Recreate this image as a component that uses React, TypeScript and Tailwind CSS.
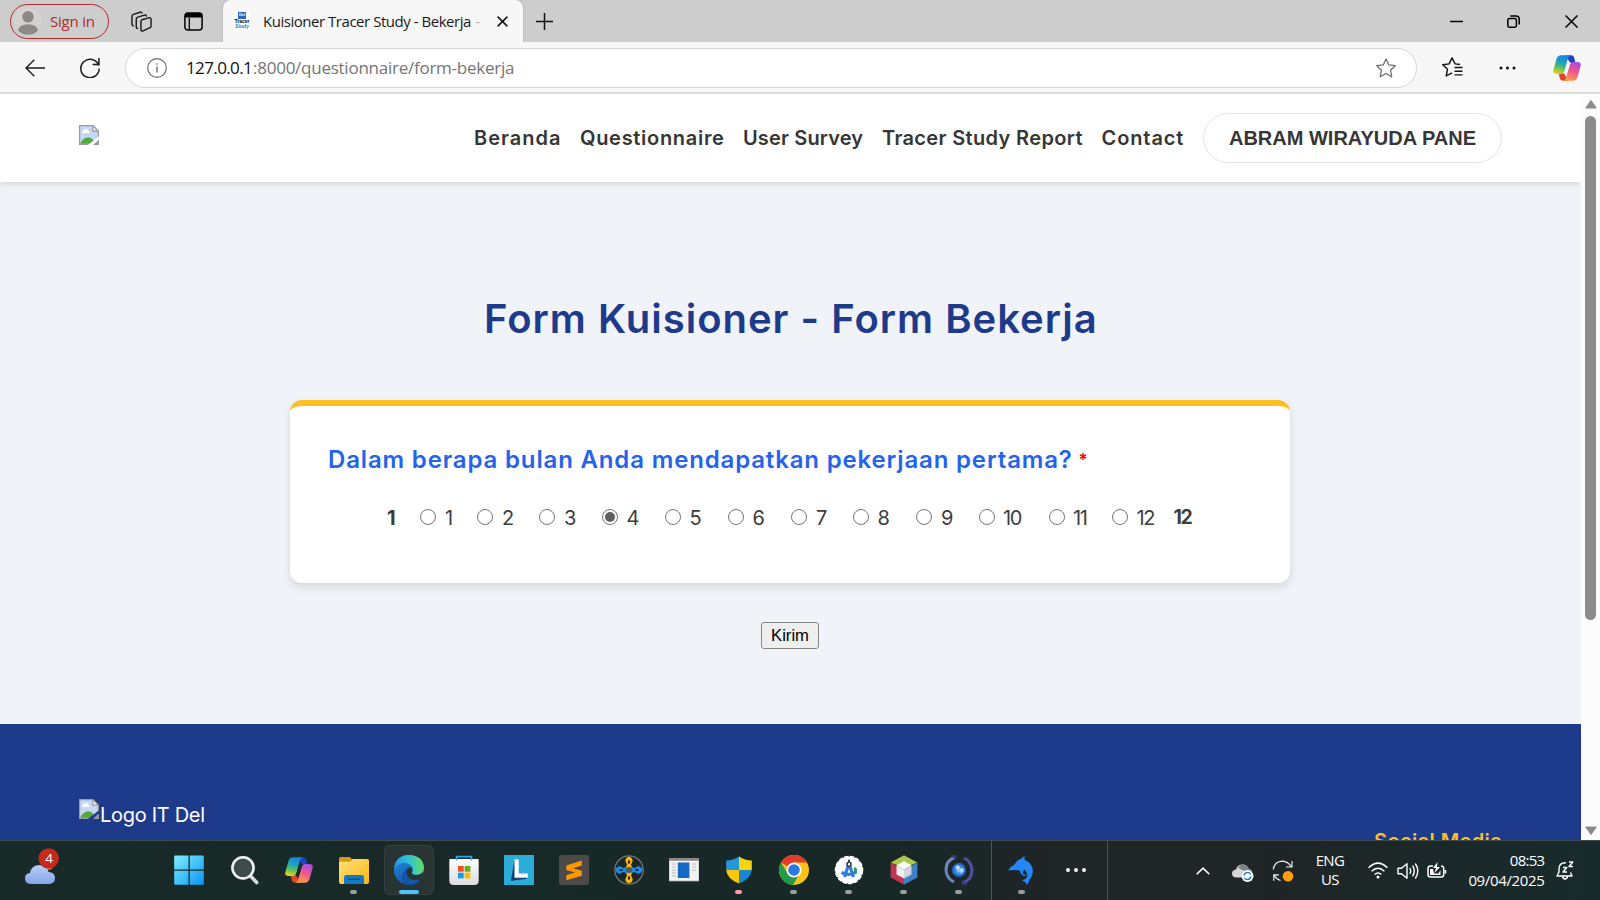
import type { ReactNode } from "react";

const POP = "font-[Inter,sans-serif]";
const SEGOE = "font-['Open_Sans',sans-serif]";
const ARIAL = "font-['Liberation_Sans',sans-serif]";

function BrokenImage({ hole }: { hole: string }) {
  return (
    <svg className="block h-5 w-5 shrink-0" viewBox="0 0 20 20">
      <path d="M.6.6h13.2l5.6 5.6v13.2H.6z" fill="#c6d8f8" stroke="#9a9a9a" strokeWidth="1.2" />
      <path d="M3 8q-.6-2.2 1.8-2.4Q5.600 3 7.600 4q2 .2 1.800 2 1.400.4.8 2z" fill="#fff" />
      <path d="M1.200 18.800Q4 12.500 9.500 12.300q3.500.2 5.200 3.200l-3 3.300z" fill="#55a83a" />
      <path d="M13.800.6v5.600h5.600z" fill="#f4f4f4" stroke="#9a9a9a" strokeWidth="1.200" />
      <path d="M20 11.200v3.200L14.200 20H8.800z" fill={hole} />
      <path d="M14.200 20l5.200-5v4.400z" fill="#9a9a9a" />
    </svg>
  );
}

function Copilot({ id, gap }: { id: string; gap: string }) {
  return (
    <svg className="h-[26px] w-7" viewBox="0 0 28 26">
      <defs>
        <linearGradient id={id + "a"} x1="0.5" y1="0" x2="0.25" y2="1">
          <stop offset="0" stopColor="#1a84e0" />
          <stop offset=".4" stopColor="#1fa6b8" />
          <stop offset=".7" stopColor="#6fc156" />
          <stop offset="1" stopColor="#f0d21a" />
        </linearGradient>
        <linearGradient id={id + "b"} x1=".8" y1="0" x2=".4" y2="1">
          <stop offset="0" stopColor="#a04be8" />
          <stop offset=".5" stopColor="#f0568f" />
          <stop offset="1" stopColor="#ff9a4a" />
        </linearGradient>
      </defs>
      <path d="M13 .3h5.200q2.300 0 3 2.400L22.500 8H17z" fill="#1b45c4" />
      <path d="M15 25.700H9.800q-2.300 0-3-2.400L5.500 18H11z" fill="#e2452c" />
      <path d="M8 .3h9.500q-1.800.6-2.500 3L11.300 16.500Q10.500 19 7.500 19H3.500Q-.8 19 .5 14.500L3.500 4Q4.600.3 8 .3z" fill={`url(#${id}a)`} />
      <path d="M20 25.700h-9.500q1.800-.6 2.500-3L16.700 9.500Q17.500 7 20.500 7h4q4.300 0 3 4.500L24.500 22q-1.100 3.700-4.500 3.700z" fill={`url(#${id}b)`} />
      <path d="M14 9q.6-1.500 2-1.500h2.200q-1 .8-1.400 2.300l-2.200 7Q13.800 18.500 12.400 18.500H10.200q1-.8 1.300-2z" fill={gap} />
    </svg>
  );
}

function TabBar() {
  return (
    <div className={`flex h-[42px] shrink-0 items-stretch bg-[#cdcdcd] ${SEGOE}`}>
      <div className="flex w-[223px] items-center pl-[10px]">
        <div className="flex h-[35px] w-[99px] items-center rounded-full border-[1.5px] border-[#b02a30] pl-[3px]">
          <svg className="h-7 w-7" viewBox="0 0 28 28">
            <circle cx="14" cy="14" r="13.500" fill="#d4d2d0" />
            <circle cx="14" cy="9.800" r="5.800" fill="#8d8986" />
            <path d="M4 23.600q1.500-6.300 10-6.300t10 6.300q-4 4.200-10 4.200T4 23.600z" fill="#8d8986" />
          </svg>
          <span className="ml-2 text-[15px] tracking-[-0.2px] whitespace-nowrap text-[#b02a30]">Sign in</span>
        </div>
        <svg className="ml-[22px] h-[21px] w-[21px]" viewBox="0 0 22 22" fill="none" stroke="#1b1b1b" strokeWidth="1.500" strokeLinejoin="round" strokeLinecap="round">
          <path d="M11.500 9.200 18.800 7.200q2.200-.5 2.200 1.600v6.800q0 1.600-1.500 2.100l-6.900 3.100q-2.200.8-2.200-1.300V11.500q0-1.800 1.100-2.300z" />
          <path d="M6.800 18.300q-1.300-.2-1.300-1.800V8.600q0-1.700 1.600-2.200l7-2.100q1.600-.4 2 .9" />
          <path d="M2.400 15.500Q1 15.100 1 13.500V5.800q0-1.700 1.600-2.200l6.900-2.300q1.400-.4 1.900.7" />
        </svg>
        <svg className="ml-8 h-[19px] w-[19px]" viewBox="0 0 19 19">
          <rect x=".9" y=".9" width="17.200" height="17.200" rx="3" fill="none" stroke="#000" strokeWidth="1.500" />
          <path d="M1 5.500V3q0-2 2-2h13q2 0 2 2v2.500z" fill="#000" />
          <path d="M5.300 6v12" stroke="#000" strokeWidth="1.300" />
        </svg>
      </div>
      <div className="flex w-[300px] items-center rounded-t-lg bg-[#f7f7f7] pl-[11px] shadow-[0_0_2px_rgba(0,0,0,0.25)]">
        <div className="flex h-[18px] w-4 flex-col items-center bg-white font-['Liberation_Sans',sans-serif] font-bold">
          <div className="h-[7px] w-[8px] bg-[#2f67b8] text-center text-[4px] leading-[6px] text-white">Del</div>
          <div className="text-[5px] leading-[5px] text-black">Tracer</div>
          <div className="text-[5px] leading-[4px] text-[#1b7fd0] italic">Study</div>
        </div>
        <div className="ml-[13px] flex w-[221px] pt-px text-[15px] tracking-[-0.470px] whitespace-nowrap text-[#1a1a1a]">
          Kuisioner Tracer Study - Bekerja&nbsp;<span className="ml-px text-[#b5b5b5]">-</span>
        </div>
        <svg className="ml-[13px] h-[11px] w-[11px]" viewBox="0 0 11 11" stroke="#111" strokeWidth="1.500">
          <path d="M.6.6l9.800 9.800M10.400.6.6 10.400" />
        </svg>
      </div>
      <div className="flex flex-1 items-center pl-[13px]">
        <svg className="h-[17px] w-[17px]" viewBox="0 0 17 17" stroke="#111" strokeWidth="1.500">
          <path d="M8.500 0v17M0 8.500h17" />
        </svg>
      </div>
      <div className="flex items-center pr-[22px]">
        <svg className="h-[13px] w-[13px]" viewBox="0 0 13 13" stroke="#000" strokeWidth="1.500"><path d="M0 6.500h13" /></svg>
        <svg className="ml-11 h-[13px] w-[13px]" viewBox="0 0 13 13" fill="none" stroke="#000" strokeWidth="1.500">
          <rect x=".8" y="3.600" width="8.600" height="8.600" rx="1.600" />
          <path d="M3.400.9H9q3.200 0 3.200 3.200v5.400" />
        </svg>
        <svg className="ml-[45px] h-[13px] w-[13px]" viewBox="0 0 13 13" stroke="#000" strokeWidth="1.500"><path d="M.5.5l12 12M12.500.5l-12 12" /></svg>
      </div>
    </div>
  );
}

function Toolbar() {
  return (
    <div className={`flex h-[52px] shrink-0 items-center border-b-2 border-[#dcdcdc] bg-[#f7f7f7] pt-px ${SEGOE}`}>
      <svg className="ml-[25px] h-[18px] w-5" viewBox="0 0 20 18" fill="none" stroke="#1b1b1b" strokeWidth="1.400">
        <path d="M20 9H1M9.300.7 1 9l8.300 8.300" />
      </svg>
      <svg className="ml-[35px] h-[21px] w-5" viewBox="0 0 20 21" fill="none" stroke="#1b1b1b" strokeWidth="1.500">
        <path d="M18.700 8.500A9.200 9.200 0 1 0 19.200 11.500" />
        <path d="M18.900 1v6.600h-6.300" />
      </svg>
      <div className="ml-[25px] flex h-10 w-[1292px] items-center rounded-full border-[1.500px] border-[#d6d6d6] bg-white pr-5 pl-[21px]">
        <svg className="h-5 w-5" viewBox="0 0 20 20" fill="none" stroke="#6b6b6b" strokeWidth="1.200">
          <circle cx="10" cy="10" r="9.300" />
          <path d="M10 8.600v6M10 5.200v1.600" strokeWidth="1.400" />
        </svg>
        <span className="ml-[19px] w-[67px] text-[17px] tracking-[-0.620px] whitespace-nowrap text-[#111]">127.0.0.1</span>
        <span className="flex-1 text-[17px] tracking-[-0.250px] whitespace-nowrap text-[#757575]">:8000/questionnaire/form-bekerja</span>
        <svg className="h-5 w-5" viewBox="0 0 20 20" fill="none" stroke="#6b6b6b" strokeWidth="1.200" strokeLinejoin="round">
          <path d="M10 .9l2.800 6 6.500.8-4.800 4.500 1.300 6.600L10 15.500l-5.800 3.300 1.300-6.600L.7 7.700l6.500-.8z" />
        </svg>
      </div>
      <svg className="ml-[25px] h-[21px] w-[21px]" viewBox="0 0 21 21" fill="none" stroke="#111" strokeWidth="1.400" strokeLinejoin="round">
        <path d="M18 7.500l-4.800-.6L10 .9l-2.800 6-6.500.8 4.800 4.500-1.300 6.800 5.800-3.200" />
        <path d="M12.500 10.500h8M12.500 14.200h8M12.500 17.900h8" />
      </svg>
      <svg className="ml-9 h-1 w-[17px]" viewBox="0 0 17 4" fill="#111">
        <circle cx="2" cy="2" r="1.500" /><circle cx="8.500" cy="2" r="1.500" /><circle cx="15" cy="2" r="1.500" />
      </svg>
      <div className="ml-[37px]"><Copilot id="tb" gap="#f7f7f7" /></div>
    </div>
  );
}

function Header() {
  const link = "shrink-0 whitespace-nowrap";
  return (
    <header className={`relative flex h-[88px] shrink-0 items-center bg-white pl-[79px] text-xl font-semibold text-[#363636] shadow-[0_2px_6px_rgba(0,0,0,0.12)] ${POP}`}>
      <div className="w-[395px] pb-[6px]"><BrokenImage hole="#fff" /></div>
      <nav className="flex items-center gap-[19.500px]">
        <a className={`${link} w-[86.500px] tracking-[1px]`}>Beranda</a>
        <a className={`${link} w-[143.500px] tracking-[0.700px]`}>Questionnaire</a>
        <a className={`${link} w-[119.500px] tracking-[0.150px]`}>User Survey</a>
        <a className={`${link} w-[200px] tracking-[0.350px]`}>Tracer Study Report</a>
        <a className={`${link} w-[82px] tracking-[0.900px]`}>Contact</a>
        <div className={`flex h-[50px] w-[299px] items-center justify-center rounded-full border border-[#e5e5e5] font-bold whitespace-nowrap ${ARIAL}`}>ABRAM WIRAYUDA PANE</div>
      </nav>
    </header>
  );
}

const options = [
  { n: 1, cell: "w-[57px]", gap: "ml-[9px]" },
  { n: 2, cell: "w-[62px]", gap: "ml-[9px]" },
  { n: 3, cell: "w-[62.500px]", gap: "ml-[9px]" },
  { n: 4, cell: "w-[63px]", gap: "ml-[9px]" },
  { n: 5, cell: "w-[63px]", gap: "ml-[9px]" },
  { n: 6, cell: "w-[63.500px]", gap: "ml-[9px]" },
  { n: 7, cell: "w-[61.500px]", gap: "ml-[9px]" },
  { n: 8, cell: "w-[63.500px]", gap: "ml-[9px]" },
  { n: 9, cell: "w-[62.500px]", gap: "ml-[9px]" },
  { n: 10, cell: "w-[70px]", gap: "ml-[8.500px]" },
  { n: 11, cell: "w-[63.500px]", gap: "ml-[8.500px]" },
  { n: 12, cell: "w-[61.500px]", gap: "ml-[8.500px]" },
];

function Radio({ checked }: { checked: boolean }) {
  return (
    <span className="flex h-4 w-4 shrink-0 items-center justify-center rounded-full border-[1.500px] border-[#767676] bg-white">
      {checked && <span className="h-[10px] w-[10px] rounded-full bg-[#5f5f5f]" />}
    </span>
  );
}

function FormSection() {
  return (
    <main className={`flex h-[542px] shrink-0 flex-col items-center bg-[#f0f4f9] pt-[107px] pr-px ${POP}`}>
      <h1 className="flex h-[60px] w-[612px] items-center text-[40px] font-semibold tracking-[1px] whitespace-nowrap text-[#1e3a8a]">Form Kuisioner - Form Bekerja</h1>
      <section className="mt-[51px] h-[183px] w-[1000px] rounded-xl border-t-[6px] border-[#fbbf24] bg-white px-[38px] pt-[39px] shadow-[0_4px_10px_rgba(0,0,0,0.12)]">
        <div className="flex h-[30px] items-center whitespace-nowrap">
          <span className="w-[750.500px] text-[24px] font-semibold tracking-[0.840px] text-[#2563eb]">Dalam berapa bulan Anda mendapatkan pekerjaan pertama?</span>
          <span className="pt-[2px] text-[17px] font-semibold text-[#f00]">*</span>
        </div>
        <div className="mt-[26px] flex h-[32px] items-center pl-[59px] text-[20px] tracking-[-1.500px] text-[#3d3d3d]">
          <span className="w-[33px] pt-px font-bold">1</span>
          {options.map((o) => (
            <label key={o.n} className={`flex items-center ${o.cell}`}>
              <Radio checked={o.n === 4} />
              <span className={`pt-[2px] ${o.gap}`}>{o.n}</span>
            </label>
          ))}
          <span className="pt-px text-[19.500px] font-bold tracking-[-1.300px]">12</span>
        </div>
      </section>
      <button className={`mt-[39px] flex h-[27px] w-[58px] items-center justify-center rounded-[3px] border border-[#858585] bg-[#efefef] text-[16.670px] text-black ${ARIAL}`}>Kirim</button>
    </main>
  );
}

function Footer() {
  return (
    <footer className={`flex h-[116px] shrink-0 items-start justify-between overflow-hidden bg-[#1e3a8a] pt-[75px] pr-[80px] pl-[79px] ${POP}`}>
      <div className="flex h-[30px] items-center text-[20px] tracking-[-0.300px] text-white">
        <div className="self-start"><BrokenImage hole="#1e3a8a" /></div>
        <span className="ml-px pt-px">Logo IT Del</span>
      </div>
      <div className="mt-[27px] flex h-[30px] w-[127px] items-center text-[20px] font-semibold tracking-[0.400px] whitespace-nowrap text-[#fbbf24]">Social Media</div>
    </footer>
  );
}

function Scrollbar() {
  return (
    <div className="flex w-[19px] shrink-0 flex-col items-center bg-[#fcfcfc] pt-[5px] pb-1">
      <svg className="h-[10px] w-3" viewBox="0 0 12 10"><path d="M6 .8 11.500 8.400q.3 1-.8 1H1.300q-1.100 0-.8-1z" fill="#8b8b8b" /></svg>
      <div className="mt-[7px] h-[504px] w-[11px] rounded-full bg-[#8b8b8b]" />
      <div className="flex-1" />
      <svg className="h-[10px] w-3" viewBox="0 0 12 10"><path d="M6 9.200 11.500 1.600q.3-1-.8-1H1.300q-1.100 0-.8 1z" fill="#8b8b8b" /></svg>
    </div>
  );
}

function App30({ children }: { children: ReactNode }) {
  return <svg className="h-[30px] w-[30px]" viewBox="0 0 30 30">{children}</svg>;
}

function Slot({ children, mark }: { children: ReactNode; mark?: "gray" | "pink" | "active" }) {
  return (
    <div className="flex h-[59px] w-[55px] shrink-0 flex-col items-center">
      <div className={mark === "active" ? "mt-1 flex h-[50px] w-[50px] flex-col items-center rounded-md border border-[#35413f] bg-[#283533] pt-[9px]" : "mt-[14px] flex h-[40px] flex-col items-center"}>
        <div className="flex h-[30px] items-center">{children}</div>
        {mark === "gray" && <div className="mt-[5px] h-1 w-[7px] rounded-full bg-[#98a09f]" />}
        {mark === "pink" && <div className="mt-[5px] h-1 w-[7px] rounded-full bg-[#ff99a4]" />}
        {mark === "active" && <div className="mt-[5px] h-1 w-5 shrink-0 rounded-full bg-[#4cc2ff]" />}
      </div>
    </div>
  );
}

function Taskbar() {
  return (
    <div className={`flex h-[60px] shrink-0 items-start border-t border-[#3f4a4b] bg-[linear-gradient(90deg,#192b29,#172826_55%,#202526_66%,#202526_78%,#182b2c)] text-[15px] text-white ${SEGOE}`}>
      <div className="w-[161px] pt-[5px] pl-[25px]">
        <svg className="h-[40px] w-[36px]" viewBox="0 0 36 40">
          <defs><linearGradient id="cl" x1="0" y1="0" x2="0" y2="1"><stop offset="0" stopColor="#b9cdf8" /><stop offset="1" stopColor="#86a6ea" /></linearGradient></defs>
          <circle cx="23" cy="18" r="6" fill="#f08a24" />
          <path d="M6 38q-6-.3-6-5.800 0-4.800 5-5.200Q6.500 19 14.500 19q7.500 0 9 7 6.500.5 6.500 6 0 5.700-6 6z" fill="url(#cl)" />
          <circle cx="23.700" cy="12.500" r="10.200" fill="#c42b1c" />
          <text x="24.200" y="17.300" fontSize="13.500" fill="#fff" textAnchor="middle">4</text>
        </svg>
      </div>
      <Slot>
        <App30>
          <defs><linearGradient id="wn" x1="0" y1="0" x2="1" y2="1"><stop offset="0" stopColor="#7cf0ff" /><stop offset="1" stopColor="#0a94f5" /></linearGradient></defs>
          <path d="M1 .5h13.500v14H.2V1.500q0-1 .8-1zM15.800.5H29q.8 0 .8 1v13h-14zM.2 15.800h14.300v14H1q-.8 0-.8-1zM15.800 15.800h14v13q0 1-.8 1H15.800z" fill="url(#wn)" />
        </App30>
      </Slot>
      <Slot>
        <App30>
          <path d="M21 20.500l6.700 7" stroke="#d9dedd" strokeWidth="3.600" strokeLinecap="round" />
          <circle cx="14" cy="12.800" r="10.600" fill="#3d4c4a" stroke="#eef1f0" strokeWidth="2.600" />
        </App30>
      </Slot>
      <Slot><Copilot id="task" gap="#192b29" /></Slot>
      <Slot mark="gray">
        <App30>
          <defs><linearGradient id="fd" x1="0" y1="0" x2="1" y2="1"><stop offset="0" stopColor="#ffe07a" /><stop offset="1" stopColor="#fbb917" /></linearGradient></defs>
          <path d="M0 8V3.500Q0 2 1.500 2H10q1.200 0 2 1l1 1.500L11 8z" fill="#d99a12" />
          <path d="M0 6.800h10q1.500 0 2.400-1.400L13 4h15.500Q30 4 30 5.500V27q0 2-2 2H2q-2 0-2-2z" fill="url(#fd)" />
          <path d="M5 29v-6.500q0-2.500 2.500-2.500h15q2.500 0 2.500 2.500V29z" fill="#1379c4" />
          <path d="M9.500 24.300h11" stroke="#0b4f8c" strokeWidth="1.500" strokeLinecap="round" />
        </App30>
      </Slot>
      <Slot mark="active">
        <App30>
          <defs>
            <linearGradient id="ea" x1="0" y1=".5" x2="1" y2=".4"><stop offset="0" stopColor="#2293e0" /><stop offset=".5" stopColor="#30c2d6" /><stop offset="1" stopColor="#66e05c" /></linearGradient>
            <linearGradient id="eb" x1="0" y1="0" x2=".5" y2="1"><stop offset="0" stopColor="#1f8fdf" /><stop offset="1" stopColor="#1357ab" /></linearGradient>
          </defs>
          <circle cx="15" cy="15" r="15" fill="url(#eb)" />
          <path d="M9.500 17q0 10 10 10.500 4.500 0 8-3-4.500 5.500-12 5.500Q9 29 8 20z" fill="#0b4793" />
          <path d="M0 14.500Q.8.200 15 0q14 .5 15 12.500 0 7.500-8 7.500-4.800-.2-4-3 1.600-2 .5-4.500Q16 8 10.500 8 3 8.500 0 14.500z" fill="url(#ea)" />
          <path d="M18 17q-.8 2.800 4 3 5.500 0 7.500-4.300Q29 21.500 27 25q-3.500 1.500-7 1-8-1.500-8-8.500.2-3.300 3-5 3.300-.5 3.300 2.500 0 1-.3 2z" fill="#283533" />
          <path d="M12.500 14q-1.500 8.500 6 11 4 1 8-1-4 6-11.500 5.800Q9 28 9.300 20q.5-4 3.200-6z" fill="#1357ab" />
        </App30>
      </Slot>
      <Slot>
        <App30>
          <defs><linearGradient id="st" x1="0" y1="0" x2="0" y2="1"><stop offset="0" stopColor="#fff" /><stop offset="1" stopColor="#dcdcdc" /></linearGradient></defs>
          <path d="M.3 5q0-1 1-1h27.400q1 0 1 1v20.500q0 4.500-4.500 4.500H4.800Q.3 30 .3 25.500z" fill="url(#st)" />
          <path d="M7.600 5.200V1.700h14.800v3.500" fill="none" stroke="#2aa5e6" strokeWidth="1.800" />
          <path d="M9 11h5.700v5.700H9z" fill="#f25022" /><path d="M15.700 11h5.700v5.700h-5.700z" fill="#6dab12" />
          <path d="M9 17.700h5.700v5.700H9z" fill="#1a9be8" /><path d="M15.700 17.700h5.700v5.700h-5.700z" fill="#ffb900" />
        </App30>
      </Slot>
      <Slot>
        <App30>
          <path d="M0 0h30v30H0z" fill="#2badd8" />
          <path d="M10.500 4.800 7 25.400l4 .2 3-5z" fill="#123d70" /><path d="M7 25.400 11 22h12.500l-1.500 2z" fill="#123d70" />
          <path d="M10.500 4.500h4.200v14h9v4.200H10.500z" fill="#fff" />
        </App30>
      </Slot>
      <Slot>
        <App30>
          <rect width="30" height="30" rx="2" fill="#4c4a49" />
          <path d="M7.300 10.500 22.800 5.400v5L14 13.200l8.800 2.600v5L7.300 25.300v-5L16 17.500l-8.700-2.400z" fill="#ff9800" />
        </App30>
      </Slot>
      <Slot>
        <App30>
          <circle cx="15" cy="15" r="14.200" fill="#1c2726" stroke="#6d7878" strokeWidth="1.300" />
          <path d="M15 1.500q3.700 1 3.700 4.500L17 9.500l1.200 3L15 14l-3.200-1.500 1.200-3L11.300 6q0-3.500 3.700-4.500zM15 28.500q3.700-1 3.700-4.500L17 20.500l1.200-3L15 16l-3.200 1.500 1.200 3-1.700 3.500q0 3.500 3.700 4.500z" fill="#f9b50b" />
          <path d="M1.500 15q1-3.700 4.500-3.700L9.500 13l3-1.200L14 15l-1.500 3.200-3-1.200L6 18.700q-3.500 0-4.500-3.700zM28.500 15q-1-3.700-4.500-3.700L20.500 13l-3-1.200L16 15l1.500 3.200 3-1.200 3.500 1.700q3.500 0 4.500-3.700z" fill="#1a8cef" />
          <circle cx="15" cy="15" r="3" fill="#4b5a62" />
          <path d="M14 5.500h2v3h-2zM14 21.500h2v3h-2zM5.500 14h3v2h-3zM21.500 14h3v2h-3z" fill="#1c2726" />
        </App30>
      </Slot>
      <Slot>
        <App30>
          <path d="M0 3.500h30v22.500H0z" fill="#f3f3f3" stroke="#a8a8a8" strokeWidth=".8" />
          <path d="M0 3.300h30v2.400H0z" fill="#8c8280" />
          <rect x="8.800" y="7.500" width="11.600" height="15.500" fill="#1569c4" />
          <path d="M3 9h4M3 12h4M3 15h4M3 18h4M3 21h4M23 9h4M23 12h4M23 15h4" stroke="#b9b9b9" strokeWidth="1.200" />
        </App30>
      </Slot>
      <Slot mark="pink">
        <App30>
          <path d="M15 1.500V15H2.200V5.500Q9 5.500 15 1.500z" fill="#2298dc" /><path d="M15 1.500V15h12.800V5.500Q21 5.500 15 1.500z" fill="#fcd40c" />
          <path d="M15 28.500V15H2.200q.8 9 12.800 13.500z" fill="#fcc70c" /><path d="M15 28.500V15h12.800Q27 24 15 28.500z" fill="#1a86d0" />
        </App30>
      </Slot>
      <Slot mark="gray">
        <App30>
          <circle cx="15" cy="15" r="15" fill="#fbc116" />
          <path d="M15 15 2 7.500A15 15 0 0 1 28 7.500z" fill="#e33b2e" />
          <path d="M2 7.500A15 15 0 0 0 14 30l7-12H15L8.500 18z" fill="#229a48" />
          <path d="M15 7.500h13L21 18.500z" fill="#fbc116" />
          <circle cx="15" cy="15" r="7.500" fill="#fff" /><circle cx="15" cy="15" r="5.800" fill="#2b78e4" />
        </App30>
      </Slot>
      <Slot mark="gray">
        <App30>
          <circle cx="15" cy="15" r="13" fill="#fff" stroke="#fff" strokeWidth="2.600" strokeDasharray="4.400 1.200" />
          <circle cx="15" cy="15" r="13.500" fill="#fff" />
          <path d="M20 12.500q3-.8 3 2.500v2.500h-3z" fill="#28a35a" />
          <path d="M15 8.500 10.500 22M15 8.500l4.500 13.500M7.500 17.500q7.500 4 15-.5" fill="none" stroke="#2f7de1" strokeWidth="3.200" />
          <circle cx="15" cy="9.300" r="2" fill="#fff" stroke="#34404e" strokeWidth="1.600" /><path d="M14 4.800h2v3h-2z" fill="#34404e" />
        </App30>
      </Slot>
      <Slot mark="gray">
        <App30>
          <path d="M15 .3 28.300 7.500 15 13 1.700 7.500z" fill="#aac84c" /><path d="M1.700 7.500 15 15v14.700L1.700 22.500z" fill="#c4334f" /><path d="M28.300 7.500 15 15v14.700l13.300-7.200z" fill="#3f7fc8" />
          <path d="M15 6 22.500 10.500 15 14.500 7.500 10.500z" fill="#fff" /><path d="M7.500 10.500 15 14.500v9l-7.500-4z" fill="#f3eeee" /><path d="M22.500 10.500 15 14.500v9l7.500-4z" fill="#cfd6de" />
        </App30>
      </Slot>
      <Slot mark="gray">
        <App30>
          <defs><radialGradient id="gb"><stop offset="0" stopColor="#a9dcff" /><stop offset=".5" stopColor="#3d8ce0" /><stop offset="1" stopColor="#1b54b0" /></radialGradient></defs>
          <path d="M11 2.500Q2 5 2 15q.5 8.500 8 12" fill="none" stroke="#6f86bd" strokeWidth="3" />
          <path d="M19 27.500q9-2.500 9-12.500-.5-8.500-8-12" fill="none" stroke="#4c529f" strokeWidth="3" />
          <path d="M6 .2h7L11.500 5zM24 29.800h-7l1.500-4.800z" fill="#3a3a86" />
          <circle cx="15" cy="15" r="7.200" fill="url(#gb)" />
          <path d="M11 12l3-2 2 2-2 3zM16 14l3-1 1 3-3 3z" fill="#d5efff" opacity=".8" />
        </App30>
      </Slot>
      <div className="ml-[4.500px] h-[59px] w-[117px] shrink-0 border-x border-[#4d5657]">
        <div className="flex">
          <div className="ml-[2px]"><Slot mark="gray">
            <App30>
              <path d="M2 15.500Q4 11.500 8.500 9.500 11 5 15.500 3.500L18.500.8v4Q27 8 26.800 17q-.3 5-3.800 8l-.2 2.500-2.300 2.300-1-2.600-3.500-1.700q3.800-1 5-3.500.5-5-3-7.500l-1.500 4-3-3Q7.500 14.500 2 15.500z" fill="#2486f5" />
              <path d="M14.500 16q1.500 4 5 4.500" fill="none" stroke="#2486f5" strokeWidth="1.600" />
            </App30>
          </Slot></div>
          <Slot><svg className="h-1 w-5" viewBox="0 0 20 4" fill="#fff"><circle cx="2" cy="2" r="2" /><circle cx="10" cy="2" r="2" /><circle cx="18" cy="2" r="2" /></svg></Slot>
        </div>
      </div>
      <div className="flex h-[59px] flex-1 items-center">
        <svg className="ml-[88px] h-2 w-[14px]" viewBox="0 0 14 8" fill="none" stroke="#fff" strokeWidth="1.600"><path d="M.7 7.300 7 1.200l6.300 6.100" /></svg>
        <svg className="mt-1 ml-[22.500px] h-[18px] w-[22px]" viewBox="0 0 22 18">
          <path d="M4.500 13.500Q0 13.500 0 9.500 0 6 4 5.500 5.500.5 10.500.5q4.500 0 6 4 3.500 1 3.500 5 0 4-4 4z" fill="#d4d6d6" />
          <path d="M6 3.500Q8 .5 11 .5q4.500.3 5.500 4 3.500 1 3.500 5L10 6z" fill="#7d8282" />
          <circle cx="15.500" cy="12" r="6" fill="#fff" />
          <path d="M12 11.500q.8-3 3.600-3 2 0 3.200 1.600M19 12.500q-.8 3-3.600 3-2 0-3.200-1.600" fill="none" stroke="#2a78d0" strokeWidth="1.400" />
        </svg>
        <svg className="ml-[18px] h-[22px] w-[22px]" viewBox="0 0 22 22" fill="none" stroke="#e8ebeb" strokeWidth="1.200">
          <path d="M1.200 9.500Q2.500 1.500 10.500 1.200q5.500.3 8.500 5.300M20 1v6h-6M7 14.800H1.800v6M2.500 15.500q2 4 6 5" />
          <circle cx="16" cy="16.200" r="5.300" fill="#ff9d0a" stroke="none" />
        </svg>
        <div className="ml-[20px] flex w-[32px] flex-col items-center pb-px text-[15px] leading-[19.500px] tracking-[-0.600px]"><span>ENG</span><span>US</span></div>
        <svg className="ml-[22px] h-[17px] w-5" viewBox="0 0 20 17" fill="none" stroke="#fff" strokeWidth="1.500">
          <path d="M.6 5.800q9.400-9.300 18.800 0M3.600 9.300q6.400-6.200 12.800 0M6.700 12.500q3.300-3.100 6.600 0" /><circle cx="10" cy="15" r="1.500" fill="#fff" stroke="none" />
        </svg>
        <svg className="ml-[9px] h-[18px] w-[22px]" viewBox="0 0 22 18" fill="none" stroke="#fff" strokeWidth="1.400" strokeLinejoin="round">
          <path d="M1 6.300h3.500L10 1.700v14.600L4.500 11.700H1zM12.800 6q1.800 3 0 6M15.600 3.700q3.400 5.300 0 10.600M18.300 1.500q5 7.500 0 15" />
        </svg>
        <svg className="ml-2 h-[18px] w-5" viewBox="0 0 20 18" fill="none" stroke="#fff" strokeWidth="1.500">
          <path d="M6 4H3.500Q1 4 1 6.500v6Q1 15 3.500 15h10.700q2.500 0 2.500-2.500v-6Q16.700 4 14 4M18.500 8v3.500" />
          <path d="M3 7h3l1 4.500h4.500L13.500 8v5H3z" fill="#fff" stroke="none" /><path d="M10.500 0 6 6h3l-1.500 5L13 5H10z" fill="#fff" stroke="none" />
        </svg>
        <div className="ml-[18px] flex w-[79.500px] flex-col items-end pb-px text-[15px] leading-[20px] tracking-[-0.350px] whitespace-nowrap"><span className="tracking-[-0.700px]">08:53</span><span>09/04/2025</span></div>
        <svg className="ml-[11px] h-[19px] w-[18px] shrink-0" viewBox="0 0 18 19" fill="none" stroke="#fff" strokeWidth="1.400" strokeLinejoin="round">
          <path d="M10 1.800Q3.500 1.500 3 7.500V11L1 15h15l-1.500-3.500M6.500 15.300q.5 2.700 2.500 2.700t2.500-2.700M7 6.500h3.800L7 11h4M13 1h3.800L13 5.500h4" />
        </svg>
      </div>
    </div>
  );
}

export default function App() {
  return (
    <div className="flex h-[900px] w-[1600px] flex-col overflow-hidden bg-white">
      <TabBar />
      <Toolbar />
      <div className="flex h-[746px] shrink-0 overflow-hidden">
        <div className="flex w-[1581px] shrink-0 flex-col overflow-hidden">
          <Header />
          <FormSection />
          <Footer />
        </div>
        <Scrollbar />
      </div>
      <Taskbar />
    </div>
  );
}
